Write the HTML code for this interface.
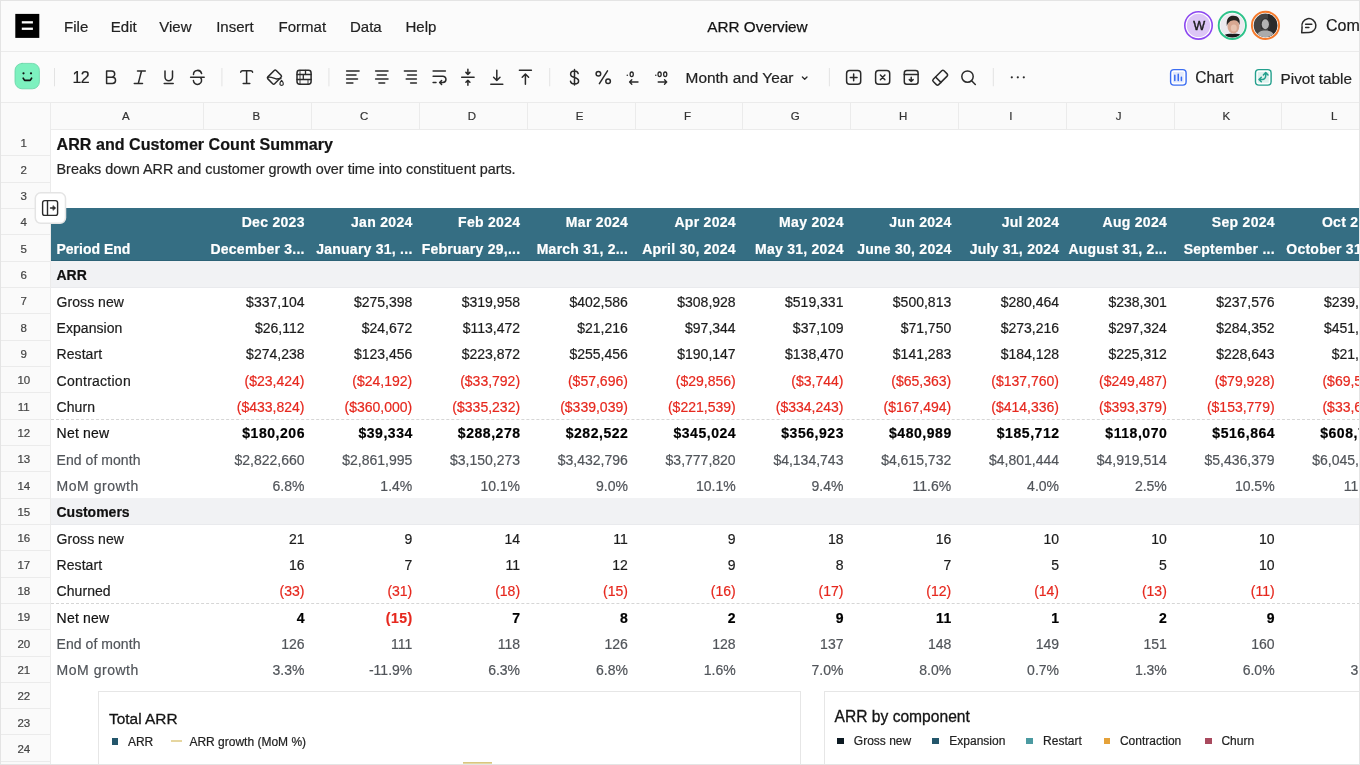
<!DOCTYPE html>
<html><head><meta charset="utf-8"><style>
html,body{margin:0;padding:0;}
body{width:1360px;height:765px;overflow:hidden;position:relative;background:#fff;font-family:"Liberation Sans", sans-serif;}
.t{position:absolute;white-space:nowrap;line-height:1;-webkit-text-stroke:0.2px currentColor;}
#wrap{position:absolute;left:0;top:0;width:1360px;height:765px;overflow:hidden;will-change:transform;background:#fff;}
</style></head><body><div id="wrap">
<div style="position:absolute;left:0.00px;top:0.00px;width:1360.00px;height:51.00px;background:#fbfbfb;"></div>
<div style="position:absolute;left:0.00px;top:51.00px;width:1360.00px;height:1.00px;background:#ebebeb;"></div>
<div style="position:absolute;left:0.00px;top:52.00px;width:1360.00px;height:49.50px;background:#fbfbfb;"></div>
<div style="position:absolute;left:0.00px;top:101.50px;width:1360.00px;height:1.00px;background:#ebebeb;"></div>
<div style="position:absolute;left:0.00px;top:102.50px;width:1360.00px;height:27.00px;background:#fafafa;"></div>
<div style="position:absolute;left:0.00px;top:128.90px;width:1360.00px;height:1.00px;background:#ebebeb;"></div>
<div style="position:absolute;left:0.00px;top:129.40px;width:50.65px;height:635.60px;background:#fafafa;"></div>
<div style="position:absolute;left:50.15px;top:102.50px;width:1.00px;height:662.50px;background:#ebebeb;"></div>
<div style="position:absolute;left:0.00px;top:155.23px;width:50.15px;height:1.00px;background:#ebebeb;"></div>
<div style="position:absolute;left:0.00px;top:181.56px;width:50.15px;height:1.00px;background:#ebebeb;"></div>
<div style="position:absolute;left:0.00px;top:207.89px;width:50.15px;height:1.00px;background:#ebebeb;"></div>
<div style="position:absolute;left:0.00px;top:234.22px;width:50.15px;height:1.00px;background:#ebebeb;"></div>
<div style="position:absolute;left:0.00px;top:260.55px;width:50.15px;height:1.00px;background:#ebebeb;"></div>
<div style="position:absolute;left:0.00px;top:286.88px;width:50.15px;height:1.00px;background:#ebebeb;"></div>
<div style="position:absolute;left:0.00px;top:313.21px;width:50.15px;height:1.00px;background:#ebebeb;"></div>
<div style="position:absolute;left:0.00px;top:339.54px;width:50.15px;height:1.00px;background:#ebebeb;"></div>
<div style="position:absolute;left:0.00px;top:365.87px;width:50.15px;height:1.00px;background:#ebebeb;"></div>
<div style="position:absolute;left:0.00px;top:392.20px;width:50.15px;height:1.00px;background:#ebebeb;"></div>
<div style="position:absolute;left:0.00px;top:418.53px;width:50.15px;height:1.00px;background:#ebebeb;"></div>
<div style="position:absolute;left:0.00px;top:444.86px;width:50.15px;height:1.00px;background:#ebebeb;"></div>
<div style="position:absolute;left:0.00px;top:471.19px;width:50.15px;height:1.00px;background:#ebebeb;"></div>
<div style="position:absolute;left:0.00px;top:497.52px;width:50.15px;height:1.00px;background:#ebebeb;"></div>
<div style="position:absolute;left:0.00px;top:523.85px;width:50.15px;height:1.00px;background:#ebebeb;"></div>
<div style="position:absolute;left:0.00px;top:550.18px;width:50.15px;height:1.00px;background:#ebebeb;"></div>
<div style="position:absolute;left:0.00px;top:576.51px;width:50.15px;height:1.00px;background:#ebebeb;"></div>
<div style="position:absolute;left:0.00px;top:602.84px;width:50.15px;height:1.00px;background:#ebebeb;"></div>
<div style="position:absolute;left:0.00px;top:629.17px;width:50.15px;height:1.00px;background:#ebebeb;"></div>
<div style="position:absolute;left:0.00px;top:655.50px;width:50.15px;height:1.00px;background:#ebebeb;"></div>
<div style="position:absolute;left:0.00px;top:681.83px;width:50.15px;height:1.00px;background:#ebebeb;"></div>
<div style="position:absolute;left:0.00px;top:708.16px;width:50.15px;height:1.00px;background:#ebebeb;"></div>
<div style="position:absolute;left:0.00px;top:734.49px;width:50.15px;height:1.00px;background:#ebebeb;"></div>
<div style="position:absolute;left:0.00px;top:760.82px;width:50.15px;height:1.00px;background:#ebebeb;"></div>
<div style="position:absolute;left:0.00px;top:787.15px;width:50.15px;height:1.00px;background:#ebebeb;"></div>
<div style="position:absolute;left:203.40px;top:102.50px;width:1.00px;height:27.00px;background:#ebebeb;"></div>
<div style="position:absolute;left:311.19px;top:102.50px;width:1.00px;height:27.00px;background:#ebebeb;"></div>
<div style="position:absolute;left:418.98px;top:102.50px;width:1.00px;height:27.00px;background:#ebebeb;"></div>
<div style="position:absolute;left:526.77px;top:102.50px;width:1.00px;height:27.00px;background:#ebebeb;"></div>
<div style="position:absolute;left:634.56px;top:102.50px;width:1.00px;height:27.00px;background:#ebebeb;"></div>
<div style="position:absolute;left:742.35px;top:102.50px;width:1.00px;height:27.00px;background:#ebebeb;"></div>
<div style="position:absolute;left:850.14px;top:102.50px;width:1.00px;height:27.00px;background:#ebebeb;"></div>
<div style="position:absolute;left:957.93px;top:102.50px;width:1.00px;height:27.00px;background:#ebebeb;"></div>
<div style="position:absolute;left:1065.72px;top:102.50px;width:1.00px;height:27.00px;background:#ebebeb;"></div>
<div style="position:absolute;left:1173.51px;top:102.50px;width:1.00px;height:27.00px;background:#ebebeb;"></div>
<div style="position:absolute;left:1281.30px;top:102.50px;width:1.00px;height:27.00px;background:#ebebeb;"></div>
<div style="position:absolute;left:1389.09px;top:102.50px;width:1.00px;height:27.00px;background:#ebebeb;"></div>
<div class="t" style="left:25.78px;width:200px;text-align:center;top:110.57px;font-size:11.5px;font-weight:400;color:#333;">A</div>
<div class="t" style="left:156.30px;width:200px;text-align:center;top:110.57px;font-size:11.5px;font-weight:400;color:#333;">B</div>
<div class="t" style="left:264.09px;width:200px;text-align:center;top:110.57px;font-size:11.5px;font-weight:400;color:#333;">C</div>
<div class="t" style="left:371.88px;width:200px;text-align:center;top:110.57px;font-size:11.5px;font-weight:400;color:#333;">D</div>
<div class="t" style="left:479.66px;width:200px;text-align:center;top:110.57px;font-size:11.5px;font-weight:400;color:#333;">E</div>
<div class="t" style="left:587.46px;width:200px;text-align:center;top:110.57px;font-size:11.5px;font-weight:400;color:#333;">F</div>
<div class="t" style="left:695.25px;width:200px;text-align:center;top:110.57px;font-size:11.5px;font-weight:400;color:#333;">G</div>
<div class="t" style="left:803.04px;width:200px;text-align:center;top:110.57px;font-size:11.5px;font-weight:400;color:#333;">H</div>
<div class="t" style="left:910.83px;width:200px;text-align:center;top:110.57px;font-size:11.5px;font-weight:400;color:#333;">I</div>
<div class="t" style="left:1018.62px;width:200px;text-align:center;top:110.57px;font-size:11.5px;font-weight:400;color:#333;">J</div>
<div class="t" style="left:1126.41px;width:200px;text-align:center;top:110.57px;font-size:11.5px;font-weight:400;color:#333;">K</div>
<div class="t" style="left:1234.20px;width:200px;text-align:center;top:110.57px;font-size:11.5px;font-weight:400;color:#333;">L</div>
<div class="t" style="left:-76.20px;width:200px;text-align:center;top:138.27px;font-size:11.5px;font-weight:400;color:#444;">1</div>
<div class="t" style="left:-76.20px;width:200px;text-align:center;top:164.60px;font-size:11.5px;font-weight:400;color:#444;">2</div>
<div class="t" style="left:-76.20px;width:200px;text-align:center;top:190.93px;font-size:11.5px;font-weight:400;color:#444;">3</div>
<div class="t" style="left:-76.20px;width:200px;text-align:center;top:217.26px;font-size:11.5px;font-weight:400;color:#444;">4</div>
<div class="t" style="left:-76.20px;width:200px;text-align:center;top:243.59px;font-size:11.5px;font-weight:400;color:#444;">5</div>
<div class="t" style="left:-76.20px;width:200px;text-align:center;top:269.92px;font-size:11.5px;font-weight:400;color:#444;">6</div>
<div class="t" style="left:-76.20px;width:200px;text-align:center;top:296.25px;font-size:11.5px;font-weight:400;color:#444;">7</div>
<div class="t" style="left:-76.20px;width:200px;text-align:center;top:322.58px;font-size:11.5px;font-weight:400;color:#444;">8</div>
<div class="t" style="left:-76.20px;width:200px;text-align:center;top:348.91px;font-size:11.5px;font-weight:400;color:#444;">9</div>
<div class="t" style="left:-76.20px;width:200px;text-align:center;top:375.24px;font-size:11.5px;font-weight:400;color:#444;">10</div>
<div class="t" style="left:-76.20px;width:200px;text-align:center;top:401.57px;font-size:11.5px;font-weight:400;color:#444;">11</div>
<div class="t" style="left:-76.20px;width:200px;text-align:center;top:427.90px;font-size:11.5px;font-weight:400;color:#444;">12</div>
<div class="t" style="left:-76.20px;width:200px;text-align:center;top:454.23px;font-size:11.5px;font-weight:400;color:#444;">13</div>
<div class="t" style="left:-76.20px;width:200px;text-align:center;top:480.56px;font-size:11.5px;font-weight:400;color:#444;">14</div>
<div class="t" style="left:-76.20px;width:200px;text-align:center;top:506.89px;font-size:11.5px;font-weight:400;color:#444;">15</div>
<div class="t" style="left:-76.20px;width:200px;text-align:center;top:533.22px;font-size:11.5px;font-weight:400;color:#444;">16</div>
<div class="t" style="left:-76.20px;width:200px;text-align:center;top:559.55px;font-size:11.5px;font-weight:400;color:#444;">17</div>
<div class="t" style="left:-76.20px;width:200px;text-align:center;top:585.88px;font-size:11.5px;font-weight:400;color:#444;">18</div>
<div class="t" style="left:-76.20px;width:200px;text-align:center;top:612.21px;font-size:11.5px;font-weight:400;color:#444;">19</div>
<div class="t" style="left:-76.20px;width:200px;text-align:center;top:638.54px;font-size:11.5px;font-weight:400;color:#444;">20</div>
<div class="t" style="left:-76.20px;width:200px;text-align:center;top:664.87px;font-size:11.5px;font-weight:400;color:#444;">21</div>
<div class="t" style="left:-76.20px;width:200px;text-align:center;top:691.20px;font-size:11.5px;font-weight:400;color:#444;">22</div>
<div class="t" style="left:-76.20px;width:200px;text-align:center;top:717.53px;font-size:11.5px;font-weight:400;color:#444;">23</div>
<div class="t" style="left:-76.20px;width:200px;text-align:center;top:743.86px;font-size:11.5px;font-weight:400;color:#444;">24</div>
<div class="t" style="left:56.60px;top:135.77px;font-size:16.1px;font-weight:700;color:#141414;">ARR and Customer Count Summary</div>
<div class="t" style="left:56.50px;top:162.21px;font-size:14.4px;font-weight:400;color:#262626;">Breaks down ARR and customer growth over time into constituent parts.</div>
<div style="position:absolute;left:50.65px;top:208.39px;width:1309.35px;height:52.21px;background:#356e83;"></div>
<div style="position:absolute;left:50.65px;top:259.60px;width:1309.35px;height:1.00px;background:#2c6276;"></div>
<div class="t" style="right:1055.21px;top:215.29px;font-size:14px;font-weight:700;color:#fff;letter-spacing:0.3px;">Dec 2023</div>
<div class="t" style="right:1055.26px;top:241.87px;font-size:14px;font-weight:700;color:#fff;letter-spacing:0.25px;">December 3...</div>
<div class="t" style="right:947.42px;top:215.29px;font-size:14px;font-weight:700;color:#fff;letter-spacing:0.3px;">Jan 2024</div>
<div class="t" style="right:947.47px;top:241.87px;font-size:14px;font-weight:700;color:#fff;letter-spacing:0.25px;">January 31, ...</div>
<div class="t" style="right:839.63px;top:215.29px;font-size:14px;font-weight:700;color:#fff;letter-spacing:0.3px;">Feb 2024</div>
<div class="t" style="right:839.68px;top:241.87px;font-size:14px;font-weight:700;color:#fff;letter-spacing:0.25px;">February 29,...</div>
<div class="t" style="right:731.84px;top:215.29px;font-size:14px;font-weight:700;color:#fff;letter-spacing:0.3px;">Mar 2024</div>
<div class="t" style="right:731.89px;top:241.87px;font-size:14px;font-weight:700;color:#fff;letter-spacing:0.25px;">March 31, 2...</div>
<div class="t" style="right:624.05px;top:215.29px;font-size:14px;font-weight:700;color:#fff;letter-spacing:0.3px;">Apr 2024</div>
<div class="t" style="right:624.10px;top:241.87px;font-size:14px;font-weight:700;color:#fff;letter-spacing:0.25px;">April 30, 2024</div>
<div class="t" style="right:516.26px;top:215.29px;font-size:14px;font-weight:700;color:#fff;letter-spacing:0.3px;">May 2024</div>
<div class="t" style="right:516.31px;top:241.87px;font-size:14px;font-weight:700;color:#fff;letter-spacing:0.25px;">May 31, 2024</div>
<div class="t" style="right:408.47px;top:215.29px;font-size:14px;font-weight:700;color:#fff;letter-spacing:0.3px;">Jun 2024</div>
<div class="t" style="right:408.52px;top:241.87px;font-size:14px;font-weight:700;color:#fff;letter-spacing:0.25px;">June 30, 2024</div>
<div class="t" style="right:300.68px;top:215.29px;font-size:14px;font-weight:700;color:#fff;letter-spacing:0.3px;">Jul 2024</div>
<div class="t" style="right:300.73px;top:241.87px;font-size:14px;font-weight:700;color:#fff;letter-spacing:0.25px;">July 31, 2024</div>
<div class="t" style="right:192.89px;top:215.29px;font-size:14px;font-weight:700;color:#fff;letter-spacing:0.3px;">Aug 2024</div>
<div class="t" style="right:192.94px;top:241.87px;font-size:14px;font-weight:700;color:#fff;letter-spacing:0.25px;">August 31, 2...</div>
<div class="t" style="right:85.10px;top:215.29px;font-size:14px;font-weight:700;color:#fff;letter-spacing:0.3px;">Sep 2024</div>
<div class="t" style="right:85.15px;top:241.87px;font-size:14px;font-weight:700;color:#fff;letter-spacing:0.25px;">September ...</div>
<div class="t" style="right:-22.69px;top:215.29px;font-size:14px;font-weight:700;color:#fff;letter-spacing:0.3px;">Oct 2024</div>
<div class="t" style="right:-22.64px;top:241.87px;font-size:14px;font-weight:700;color:#fff;letter-spacing:0.25px;">October 31, ...</div>
<div class="t" style="left:56.50px;top:241.72px;font-size:14px;font-weight:700;color:#fff;">Period End</div>
<div style="position:absolute;left:51.15px;top:261.35px;width:1309.35px;height:25.73px;background:#f1f2f4;"></div>
<div style="position:absolute;left:51.15px;top:286.58px;width:1309.35px;height:1.00px;background:#e9eaed;"></div>
<div class="t" style="left:56.50px;top:268.05px;font-size:14px;font-weight:700;color:#111;">ARR</div>
<div style="position:absolute;left:51.15px;top:498.32px;width:1309.35px;height:25.73px;background:#f1f2f4;"></div>
<div style="position:absolute;left:51.15px;top:523.55px;width:1309.35px;height:1.00px;background:#e9eaed;"></div>
<div class="t" style="left:56.50px;top:505.02px;font-size:14px;font-weight:700;color:#111;">Customers</div>
<div class="t" style="left:56.60px;top:294.83px;font-size:14px;font-weight:400;color:#1c1c1c;letter-spacing:0.05px;">Gross new</div>
<div class="t" style="right:1055.51px;top:294.83px;font-size:14px;font-weight:400;color:#1c1c1c;">$337,104</div>
<div class="t" style="right:947.72px;top:294.83px;font-size:14px;font-weight:400;color:#1c1c1c;">$275,398</div>
<div class="t" style="right:839.93px;top:294.83px;font-size:14px;font-weight:400;color:#1c1c1c;">$319,958</div>
<div class="t" style="right:732.14px;top:294.83px;font-size:14px;font-weight:400;color:#1c1c1c;">$402,586</div>
<div class="t" style="right:624.35px;top:294.83px;font-size:14px;font-weight:400;color:#1c1c1c;">$308,928</div>
<div class="t" style="right:516.56px;top:294.83px;font-size:14px;font-weight:400;color:#1c1c1c;">$519,331</div>
<div class="t" style="right:408.77px;top:294.83px;font-size:14px;font-weight:400;color:#1c1c1c;">$500,813</div>
<div class="t" style="right:300.98px;top:294.83px;font-size:14px;font-weight:400;color:#1c1c1c;">$280,464</div>
<div class="t" style="right:193.19px;top:294.83px;font-size:14px;font-weight:400;color:#1c1c1c;">$238,301</div>
<div class="t" style="right:85.40px;top:294.83px;font-size:14px;font-weight:400;color:#1c1c1c;">$237,576</div>
<div class="t" style="right:-22.39px;top:294.83px;font-size:14px;font-weight:400;color:#1c1c1c;">$239,487</div>
<div class="t" style="left:56.60px;top:321.16px;font-size:14px;font-weight:400;color:#1c1c1c;letter-spacing:0.05px;">Expansion</div>
<div class="t" style="right:1055.51px;top:321.16px;font-size:14px;font-weight:400;color:#1c1c1c;">$26,112</div>
<div class="t" style="right:947.72px;top:321.16px;font-size:14px;font-weight:400;color:#1c1c1c;">$24,672</div>
<div class="t" style="right:839.93px;top:321.16px;font-size:14px;font-weight:400;color:#1c1c1c;">$113,472</div>
<div class="t" style="right:732.14px;top:321.16px;font-size:14px;font-weight:400;color:#1c1c1c;">$21,216</div>
<div class="t" style="right:624.35px;top:321.16px;font-size:14px;font-weight:400;color:#1c1c1c;">$97,344</div>
<div class="t" style="right:516.56px;top:321.16px;font-size:14px;font-weight:400;color:#1c1c1c;">$37,109</div>
<div class="t" style="right:408.77px;top:321.16px;font-size:14px;font-weight:400;color:#1c1c1c;">$71,750</div>
<div class="t" style="right:300.98px;top:321.16px;font-size:14px;font-weight:400;color:#1c1c1c;">$273,216</div>
<div class="t" style="right:193.19px;top:321.16px;font-size:14px;font-weight:400;color:#1c1c1c;">$297,324</div>
<div class="t" style="right:85.40px;top:321.16px;font-size:14px;font-weight:400;color:#1c1c1c;">$284,352</div>
<div class="t" style="right:-22.39px;top:321.16px;font-size:14px;font-weight:400;color:#1c1c1c;">$451,792</div>
<div class="t" style="left:56.60px;top:347.49px;font-size:14px;font-weight:400;color:#1c1c1c;letter-spacing:0.05px;">Restart</div>
<div class="t" style="right:1055.51px;top:347.49px;font-size:14px;font-weight:400;color:#1c1c1c;">$274,238</div>
<div class="t" style="right:947.72px;top:347.49px;font-size:14px;font-weight:400;color:#1c1c1c;">$123,456</div>
<div class="t" style="right:839.93px;top:347.49px;font-size:14px;font-weight:400;color:#1c1c1c;">$223,872</div>
<div class="t" style="right:732.14px;top:347.49px;font-size:14px;font-weight:400;color:#1c1c1c;">$255,456</div>
<div class="t" style="right:624.35px;top:347.49px;font-size:14px;font-weight:400;color:#1c1c1c;">$190,147</div>
<div class="t" style="right:516.56px;top:347.49px;font-size:14px;font-weight:400;color:#1c1c1c;">$138,470</div>
<div class="t" style="right:408.77px;top:347.49px;font-size:14px;font-weight:400;color:#1c1c1c;">$141,283</div>
<div class="t" style="right:300.98px;top:347.49px;font-size:14px;font-weight:400;color:#1c1c1c;">$184,128</div>
<div class="t" style="right:193.19px;top:347.49px;font-size:14px;font-weight:400;color:#1c1c1c;">$225,312</div>
<div class="t" style="right:85.40px;top:347.49px;font-size:14px;font-weight:400;color:#1c1c1c;">$228,643</div>
<div class="t" style="right:-22.39px;top:347.49px;font-size:14px;font-weight:400;color:#1c1c1c;">$21,983</div>
<div class="t" style="left:56.60px;top:373.82px;font-size:14px;font-weight:400;color:#1c1c1c;letter-spacing:0.25px;">Contraction</div>
<div class="t" style="right:1055.51px;top:373.82px;font-size:14px;font-weight:400;color:#e6281e;">($23,424)</div>
<div class="t" style="right:947.72px;top:373.82px;font-size:14px;font-weight:400;color:#e6281e;">($24,192)</div>
<div class="t" style="right:839.93px;top:373.82px;font-size:14px;font-weight:400;color:#e6281e;">($33,792)</div>
<div class="t" style="right:732.14px;top:373.82px;font-size:14px;font-weight:400;color:#e6281e;">($57,696)</div>
<div class="t" style="right:624.35px;top:373.82px;font-size:14px;font-weight:400;color:#e6281e;">($29,856)</div>
<div class="t" style="right:516.56px;top:373.82px;font-size:14px;font-weight:400;color:#e6281e;">($3,744)</div>
<div class="t" style="right:408.77px;top:373.82px;font-size:14px;font-weight:400;color:#e6281e;">($65,363)</div>
<div class="t" style="right:300.98px;top:373.82px;font-size:14px;font-weight:400;color:#e6281e;">($137,760)</div>
<div class="t" style="right:193.19px;top:373.82px;font-size:14px;font-weight:400;color:#e6281e;">($249,487)</div>
<div class="t" style="right:85.40px;top:373.82px;font-size:14px;font-weight:400;color:#e6281e;">($79,928)</div>
<div class="t" style="right:-22.39px;top:373.82px;font-size:14px;font-weight:400;color:#e6281e;">($69,521)</div>
<div class="t" style="left:56.60px;top:400.15px;font-size:14px;font-weight:400;color:#1c1c1c;letter-spacing:0.05px;">Churn</div>
<div class="t" style="right:1055.51px;top:400.15px;font-size:14px;font-weight:400;color:#e6281e;">($433,824)</div>
<div class="t" style="right:947.72px;top:400.15px;font-size:14px;font-weight:400;color:#e6281e;">($360,000)</div>
<div class="t" style="right:839.93px;top:400.15px;font-size:14px;font-weight:400;color:#e6281e;">($335,232)</div>
<div class="t" style="right:732.14px;top:400.15px;font-size:14px;font-weight:400;color:#e6281e;">($339,039)</div>
<div class="t" style="right:624.35px;top:400.15px;font-size:14px;font-weight:400;color:#e6281e;">($221,539)</div>
<div class="t" style="right:516.56px;top:400.15px;font-size:14px;font-weight:400;color:#e6281e;">($334,243)</div>
<div class="t" style="right:408.77px;top:400.15px;font-size:14px;font-weight:400;color:#e6281e;">($167,494)</div>
<div class="t" style="right:300.98px;top:400.15px;font-size:14px;font-weight:400;color:#e6281e;">($414,336)</div>
<div class="t" style="right:193.19px;top:400.15px;font-size:14px;font-weight:400;color:#e6281e;">($393,379)</div>
<div class="t" style="right:85.40px;top:400.15px;font-size:14px;font-weight:400;color:#e6281e;">($153,779)</div>
<div class="t" style="right:-22.39px;top:400.15px;font-size:14px;font-weight:400;color:#e6281e;">($33,612)</div>
<div class="t" style="left:56.60px;top:426.48px;font-size:14px;font-weight:400;color:#111;letter-spacing:0.2px;">Net new</div>
<div class="t" style="right:1054.96px;top:426.48px;font-size:14px;font-weight:700;color:#000;letter-spacing:0.55px;">$180,206</div>
<div class="t" style="right:947.17px;top:426.48px;font-size:14px;font-weight:700;color:#000;letter-spacing:0.55px;">$39,334</div>
<div class="t" style="right:839.38px;top:426.48px;font-size:14px;font-weight:700;color:#000;letter-spacing:0.55px;">$288,278</div>
<div class="t" style="right:731.59px;top:426.48px;font-size:14px;font-weight:700;color:#000;letter-spacing:0.55px;">$282,522</div>
<div class="t" style="right:623.80px;top:426.48px;font-size:14px;font-weight:700;color:#000;letter-spacing:0.55px;">$345,024</div>
<div class="t" style="right:516.01px;top:426.48px;font-size:14px;font-weight:700;color:#000;letter-spacing:0.55px;">$356,923</div>
<div class="t" style="right:408.22px;top:426.48px;font-size:14px;font-weight:700;color:#000;letter-spacing:0.55px;">$480,989</div>
<div class="t" style="right:300.43px;top:426.48px;font-size:14px;font-weight:700;color:#000;letter-spacing:0.55px;">$185,712</div>
<div class="t" style="right:192.64px;top:426.48px;font-size:14px;font-weight:700;color:#000;letter-spacing:0.55px;">$118,070</div>
<div class="t" style="right:84.85px;top:426.48px;font-size:14px;font-weight:700;color:#000;letter-spacing:0.55px;">$516,864</div>
<div class="t" style="right:-22.94px;top:426.48px;font-size:14px;font-weight:700;color:#000;letter-spacing:0.55px;">$608,719</div>
<div class="t" style="left:56.60px;top:452.81px;font-size:14px;font-weight:400;color:#51555a;letter-spacing:0.05px;">End of month</div>
<div class="t" style="right:1055.51px;top:452.81px;font-size:14px;font-weight:400;color:#51555a;">$2,822,660</div>
<div class="t" style="right:947.72px;top:452.81px;font-size:14px;font-weight:400;color:#51555a;">$2,861,995</div>
<div class="t" style="right:839.93px;top:452.81px;font-size:14px;font-weight:400;color:#51555a;">$3,150,273</div>
<div class="t" style="right:732.14px;top:452.81px;font-size:14px;font-weight:400;color:#51555a;">$3,432,796</div>
<div class="t" style="right:624.35px;top:452.81px;font-size:14px;font-weight:400;color:#51555a;">$3,777,820</div>
<div class="t" style="right:516.56px;top:452.81px;font-size:14px;font-weight:400;color:#51555a;">$4,134,743</div>
<div class="t" style="right:408.77px;top:452.81px;font-size:14px;font-weight:400;color:#51555a;">$4,615,732</div>
<div class="t" style="right:300.98px;top:452.81px;font-size:14px;font-weight:400;color:#51555a;">$4,801,444</div>
<div class="t" style="right:193.19px;top:452.81px;font-size:14px;font-weight:400;color:#51555a;">$4,919,514</div>
<div class="t" style="right:85.40px;top:452.81px;font-size:14px;font-weight:400;color:#51555a;">$5,436,379</div>
<div class="t" style="right:-22.39px;top:452.81px;font-size:14px;font-weight:400;color:#51555a;">$6,045,098</div>
<div class="t" style="left:56.60px;top:479.14px;font-size:14px;font-weight:400;color:#51555a;letter-spacing:0.52px;">MoM growth</div>
<div class="t" style="right:1055.51px;top:479.14px;font-size:14px;font-weight:400;color:#51555a;">6.8%</div>
<div class="t" style="right:947.72px;top:479.14px;font-size:14px;font-weight:400;color:#51555a;">1.4%</div>
<div class="t" style="right:839.93px;top:479.14px;font-size:14px;font-weight:400;color:#51555a;">10.1%</div>
<div class="t" style="right:732.14px;top:479.14px;font-size:14px;font-weight:400;color:#51555a;">9.0%</div>
<div class="t" style="right:624.35px;top:479.14px;font-size:14px;font-weight:400;color:#51555a;">10.1%</div>
<div class="t" style="right:516.56px;top:479.14px;font-size:14px;font-weight:400;color:#51555a;">9.4%</div>
<div class="t" style="right:408.77px;top:479.14px;font-size:14px;font-weight:400;color:#51555a;">11.6%</div>
<div class="t" style="right:300.98px;top:479.14px;font-size:14px;font-weight:400;color:#51555a;">4.0%</div>
<div class="t" style="right:193.19px;top:479.14px;font-size:14px;font-weight:400;color:#51555a;">2.5%</div>
<div class="t" style="right:85.40px;top:479.14px;font-size:14px;font-weight:400;color:#51555a;">10.5%</div>
<div class="t" style="right:-22.39px;top:479.14px;font-size:14px;font-weight:400;color:#51555a;">11.2%</div>
<div class="t" style="left:56.60px;top:531.80px;font-size:14px;font-weight:400;color:#1c1c1c;letter-spacing:0.05px;">Gross new</div>
<div class="t" style="right:1055.51px;top:531.80px;font-size:14px;font-weight:400;color:#1c1c1c;">21</div>
<div class="t" style="right:947.72px;top:531.80px;font-size:14px;font-weight:400;color:#1c1c1c;">9</div>
<div class="t" style="right:839.93px;top:531.80px;font-size:14px;font-weight:400;color:#1c1c1c;">14</div>
<div class="t" style="right:732.14px;top:531.80px;font-size:14px;font-weight:400;color:#1c1c1c;">11</div>
<div class="t" style="right:624.35px;top:531.80px;font-size:14px;font-weight:400;color:#1c1c1c;">9</div>
<div class="t" style="right:516.56px;top:531.80px;font-size:14px;font-weight:400;color:#1c1c1c;">18</div>
<div class="t" style="right:408.77px;top:531.80px;font-size:14px;font-weight:400;color:#1c1c1c;">16</div>
<div class="t" style="right:300.98px;top:531.80px;font-size:14px;font-weight:400;color:#1c1c1c;">10</div>
<div class="t" style="right:193.19px;top:531.80px;font-size:14px;font-weight:400;color:#1c1c1c;">10</div>
<div class="t" style="right:85.40px;top:531.80px;font-size:14px;font-weight:400;color:#1c1c1c;">10</div>
<div class="t" style="right:-22.39px;top:531.80px;font-size:14px;font-weight:400;color:#1c1c1c;">12</div>
<div class="t" style="left:56.60px;top:558.13px;font-size:14px;font-weight:400;color:#1c1c1c;letter-spacing:0.05px;">Restart</div>
<div class="t" style="right:1055.51px;top:558.13px;font-size:14px;font-weight:400;color:#1c1c1c;">16</div>
<div class="t" style="right:947.72px;top:558.13px;font-size:14px;font-weight:400;color:#1c1c1c;">7</div>
<div class="t" style="right:839.93px;top:558.13px;font-size:14px;font-weight:400;color:#1c1c1c;">11</div>
<div class="t" style="right:732.14px;top:558.13px;font-size:14px;font-weight:400;color:#1c1c1c;">12</div>
<div class="t" style="right:624.35px;top:558.13px;font-size:14px;font-weight:400;color:#1c1c1c;">9</div>
<div class="t" style="right:516.56px;top:558.13px;font-size:14px;font-weight:400;color:#1c1c1c;">8</div>
<div class="t" style="right:408.77px;top:558.13px;font-size:14px;font-weight:400;color:#1c1c1c;">7</div>
<div class="t" style="right:300.98px;top:558.13px;font-size:14px;font-weight:400;color:#1c1c1c;">5</div>
<div class="t" style="right:193.19px;top:558.13px;font-size:14px;font-weight:400;color:#1c1c1c;">5</div>
<div class="t" style="right:85.40px;top:558.13px;font-size:14px;font-weight:400;color:#1c1c1c;">10</div>
<div class="t" style="right:-22.39px;top:558.13px;font-size:14px;font-weight:400;color:#1c1c1c;">9</div>
<div class="t" style="left:56.60px;top:584.46px;font-size:14px;font-weight:400;color:#1c1c1c;letter-spacing:0.05px;">Churned</div>
<div class="t" style="right:1055.51px;top:584.46px;font-size:14px;font-weight:400;color:#e6281e;">(33)</div>
<div class="t" style="right:947.72px;top:584.46px;font-size:14px;font-weight:400;color:#e6281e;">(31)</div>
<div class="t" style="right:839.93px;top:584.46px;font-size:14px;font-weight:400;color:#e6281e;">(18)</div>
<div class="t" style="right:732.14px;top:584.46px;font-size:14px;font-weight:400;color:#e6281e;">(15)</div>
<div class="t" style="right:624.35px;top:584.46px;font-size:14px;font-weight:400;color:#e6281e;">(16)</div>
<div class="t" style="right:516.56px;top:584.46px;font-size:14px;font-weight:400;color:#e6281e;">(17)</div>
<div class="t" style="right:408.77px;top:584.46px;font-size:14px;font-weight:400;color:#e6281e;">(12)</div>
<div class="t" style="right:300.98px;top:584.46px;font-size:14px;font-weight:400;color:#e6281e;">(14)</div>
<div class="t" style="right:193.19px;top:584.46px;font-size:14px;font-weight:400;color:#e6281e;">(13)</div>
<div class="t" style="right:85.40px;top:584.46px;font-size:14px;font-weight:400;color:#e6281e;">(11)</div>
<div class="t" style="right:-22.39px;top:584.46px;font-size:14px;font-weight:400;color:#e6281e;">(8)</div>
<div class="t" style="left:56.60px;top:610.79px;font-size:14px;font-weight:400;color:#111;letter-spacing:0.2px;">Net new</div>
<div class="t" style="right:1054.96px;top:610.79px;font-size:14px;font-weight:700;color:#000;letter-spacing:0.55px;">4</div>
<div class="t" style="right:947.17px;top:610.79px;font-size:14px;font-weight:700;color:#e6281e;letter-spacing:0.55px;">(15)</div>
<div class="t" style="right:839.38px;top:610.79px;font-size:14px;font-weight:700;color:#000;letter-spacing:0.55px;">7</div>
<div class="t" style="right:731.59px;top:610.79px;font-size:14px;font-weight:700;color:#000;letter-spacing:0.55px;">8</div>
<div class="t" style="right:623.80px;top:610.79px;font-size:14px;font-weight:700;color:#000;letter-spacing:0.55px;">2</div>
<div class="t" style="right:516.01px;top:610.79px;font-size:14px;font-weight:700;color:#000;letter-spacing:0.55px;">9</div>
<div class="t" style="right:408.22px;top:610.79px;font-size:14px;font-weight:700;color:#000;letter-spacing:0.55px;">11</div>
<div class="t" style="right:300.43px;top:610.79px;font-size:14px;font-weight:700;color:#000;letter-spacing:0.55px;">1</div>
<div class="t" style="right:192.64px;top:610.79px;font-size:14px;font-weight:700;color:#000;letter-spacing:0.55px;">2</div>
<div class="t" style="right:84.85px;top:610.79px;font-size:14px;font-weight:700;color:#000;letter-spacing:0.55px;">9</div>
<div class="t" style="right:-22.94px;top:610.79px;font-size:14px;font-weight:700;color:#000;letter-spacing:0.55px;">7</div>
<div class="t" style="left:56.60px;top:637.12px;font-size:14px;font-weight:400;color:#51555a;letter-spacing:0.05px;">End of month</div>
<div class="t" style="right:1055.51px;top:637.12px;font-size:14px;font-weight:400;color:#51555a;">126</div>
<div class="t" style="right:947.72px;top:637.12px;font-size:14px;font-weight:400;color:#51555a;">111</div>
<div class="t" style="right:839.93px;top:637.12px;font-size:14px;font-weight:400;color:#51555a;">118</div>
<div class="t" style="right:732.14px;top:637.12px;font-size:14px;font-weight:400;color:#51555a;">126</div>
<div class="t" style="right:624.35px;top:637.12px;font-size:14px;font-weight:400;color:#51555a;">128</div>
<div class="t" style="right:516.56px;top:637.12px;font-size:14px;font-weight:400;color:#51555a;">137</div>
<div class="t" style="right:408.77px;top:637.12px;font-size:14px;font-weight:400;color:#51555a;">148</div>
<div class="t" style="right:300.98px;top:637.12px;font-size:14px;font-weight:400;color:#51555a;">149</div>
<div class="t" style="right:193.19px;top:637.12px;font-size:14px;font-weight:400;color:#51555a;">151</div>
<div class="t" style="right:85.40px;top:637.12px;font-size:14px;font-weight:400;color:#51555a;">160</div>
<div class="t" style="right:-22.39px;top:637.12px;font-size:14px;font-weight:400;color:#51555a;">167</div>
<div class="t" style="left:56.60px;top:663.45px;font-size:14px;font-weight:400;color:#51555a;letter-spacing:0.52px;">MoM growth</div>
<div class="t" style="right:1055.51px;top:663.45px;font-size:14px;font-weight:400;color:#51555a;">3.3%</div>
<div class="t" style="right:947.72px;top:663.45px;font-size:14px;font-weight:400;color:#51555a;">-11.9%</div>
<div class="t" style="right:839.93px;top:663.45px;font-size:14px;font-weight:400;color:#51555a;">6.3%</div>
<div class="t" style="right:732.14px;top:663.45px;font-size:14px;font-weight:400;color:#51555a;">6.8%</div>
<div class="t" style="right:624.35px;top:663.45px;font-size:14px;font-weight:400;color:#51555a;">1.6%</div>
<div class="t" style="right:516.56px;top:663.45px;font-size:14px;font-weight:400;color:#51555a;">7.0%</div>
<div class="t" style="right:408.77px;top:663.45px;font-size:14px;font-weight:400;color:#51555a;">8.0%</div>
<div class="t" style="right:300.98px;top:663.45px;font-size:14px;font-weight:400;color:#51555a;">0.7%</div>
<div class="t" style="right:193.19px;top:663.45px;font-size:14px;font-weight:400;color:#51555a;">1.3%</div>
<div class="t" style="right:85.40px;top:663.45px;font-size:14px;font-weight:400;color:#51555a;">6.0%</div>
<div class="t" style="right:-22.39px;top:663.45px;font-size:14px;font-weight:400;color:#51555a;">3.4%</div>
<div style="position:absolute;left:51.15px;top:418.53px;width:1309.35px;height:0;border-top:1px dashed #d6d6d6"></div>
<div style="position:absolute;left:51.15px;top:602.84px;width:1309.35px;height:0;border-top:1px dashed #d6d6d6"></div>
<div class="t" style="left:64.10px;top:19.10px;font-size:15px;font-weight:400;color:#222;">File</div>
<div class="t" style="left:110.80px;top:19.10px;font-size:15px;font-weight:400;color:#222;">Edit</div>
<div class="t" style="left:159.30px;top:19.10px;font-size:15px;font-weight:400;color:#222;">View</div>
<div class="t" style="left:216.20px;top:19.10px;font-size:15px;font-weight:400;color:#222;">Insert</div>
<div class="t" style="left:278.60px;top:19.10px;font-size:15px;font-weight:400;color:#222;">Format</div>
<div class="t" style="left:350.00px;top:19.10px;font-size:15px;font-weight:400;color:#222;">Data</div>
<div class="t" style="left:405.50px;top:19.10px;font-size:15px;font-weight:400;color:#222;">Help</div>
<div class="t" style="left:707.30px;top:18.65px;font-size:15.3px;font-weight:400;color:#141414;-webkit-text-stroke:0.25px #141414;">ARR Overview</div>
<div class="t" style="left:1326.00px;top:18.06px;font-size:16px;font-weight:400;color:#1a1a1a;">Com</div>
<div class="t" style="left:72.60px;top:69.76px;font-size:16px;font-weight:400;color:#222;letter-spacing:-0.8px;">12</div>
<div class="t" style="left:685.60px;top:70.06px;font-size:15.4px;font-weight:400;color:#222;">Month and Year</div>
<div class="t" style="left:1195.30px;top:70.29px;font-size:15.6px;font-weight:400;color:#222;">Chart</div>
<div class="t" style="left:1280.60px;top:70.55px;font-size:15.3px;font-weight:400;color:#222;">Pivot table</div>
<div style="position:absolute;left:98.2px;top:691.2px;width:702.7px;height:120px;border:1px solid #e6e6e6;box-sizing:border-box;background:#fff"></div>
<div style="position:absolute;left:824.4px;top:690.8px;width:600px;height:120px;border:1px solid #e6e6e6;box-sizing:border-box;background:#fff"></div>
<div class="t" style="left:109.10px;top:710.76px;font-size:15.4px;font-weight:400;color:#141414;-webkit-text-stroke:0.3px #141414;">Total ARR</div>
<div class="t" style="left:834.60px;top:709.39px;font-size:15.6px;font-weight:400;color:#141414;-webkit-text-stroke:0.3px #141414;">ARR by component</div>
<div style="position:absolute;left:111.50px;top:738.20px;width:6.80px;height:7.00px;background:#23566b;"></div>
<div class="t" style="left:127.90px;top:735.84px;font-size:12px;font-weight:400;color:#222;">ARR</div>
<div style="position:absolute;left:170.60px;top:740.00px;width:11.70px;height:2.00px;background:#e6d6a0;"></div>
<div class="t" style="left:189.40px;top:735.84px;font-size:12px;font-weight:400;color:#222;">ARR growth (MoM %)</div>
<div style="position:absolute;left:463.40px;top:762.40px;width:28.20px;height:3.00px;background:#e6d8a3;"></div>
<div style="position:absolute;left:463.40px;top:762.40px;width:28.20px;height:1.00px;background:#d8c67f;"></div>
<div style="position:absolute;left:837.40px;top:737.60px;width:6.60px;height:6.60px;background:#0d1a22;"></div>
<div class="t" style="left:853.80px;top:735.44px;font-size:12px;font-weight:400;color:#222;">Gross new</div>
<div style="position:absolute;left:932.40px;top:737.60px;width:6.60px;height:6.60px;background:#23566b;"></div>
<div class="t" style="left:949.30px;top:735.44px;font-size:12px;font-weight:400;color:#222;">Expansion</div>
<div style="position:absolute;left:1026.30px;top:737.60px;width:6.60px;height:6.60px;background:#4b9aa1;"></div>
<div class="t" style="left:1043.10px;top:735.44px;font-size:12px;font-weight:400;color:#222;">Restart</div>
<div style="position:absolute;left:1103.80px;top:737.60px;width:6.60px;height:6.60px;background:#e5a23a;"></div>
<div class="t" style="left:1119.90px;top:735.44px;font-size:12px;font-weight:400;color:#222;">Contraction</div>
<div style="position:absolute;left:1205.00px;top:737.60px;width:6.60px;height:6.60px;background:#a94a5e;"></div>
<div class="t" style="left:1221.40px;top:735.44px;font-size:12px;font-weight:400;color:#222;">Churn</div>
<div style="position:absolute;left:0.00px;top:0.00px;width:1360.00px;height:1.00px;background:#e4e4e4;"></div>
<div style="position:absolute;left:0.00px;top:0.00px;width:1.00px;height:765.00px;background:#e4e4e4;"></div>
<div style="position:absolute;left:1359.00px;top:0.00px;width:1.00px;height:765.00px;background:#e4e4e4;"></div>
<div style="position:absolute;left:0.00px;top:764.00px;width:1360.00px;height:1.00px;background:#e4e4e4;"></div>
<svg width="1360" height="765" viewBox="0 0 1360 765" style="position:absolute;left:0;top:0" fill="none" stroke="#2a2a2a" stroke-width="1.5" stroke-linecap="round" stroke-linejoin="round">
<!-- logo -->
<rect x="15.3" y="13.9" width="24" height="24" fill="#000" stroke="none"/>
<rect x="21.8" y="21.2" width="11.1" height="2.3" fill="#fff" stroke="none"/>
<rect x="21.8" y="27.6" width="11.1" height="2.3" fill="#fff" stroke="none"/>
<!-- smiley -->
<rect x="15" y="63.4" width="24.4" height="25.4" rx="7" fill="#7df1bf" stroke="#66d3a4" stroke-width="0.8"/>
<circle cx="23.5" cy="73.3" r="1.1" fill="#111" stroke="none"/>
<circle cx="31" cy="73.3" r="1.1" fill="#111" stroke="none"/>
<path d="M23.2,78.2 L24.6,80.4 H30.2 L31.6,78.2" stroke="#111" stroke-width="1.6"/>
<!-- separators -->
<g stroke="#e3e3e3" stroke-width="1" stroke-linecap="butt">
<path d="M54.5,68 V86.3"/><path d="M221.9,68 V86.3"/><path d="M328.9,68 V86.3"/><path d="M549.7,68 V86.3"/><path d="M829.4,68 V86.3"/><path d="M993.3,68 V86.3"/>
</g>
<!-- B -->
<path d="M106.6,71 H111.6 A3.1,3.1 0 0 1 111.6,77.2 H106.6 Z M106.6,77.2 H112.4 A3.15,3.15 0 0 1 112.4,83.5 H106.6 Z"/>
<!-- I -->
<path d="M137.5,71 H145.3 M134.3,83.4 H142.5 M141.5,71 L138.3,83.4"/>
<!-- U -->
<path d="M165,71 V77 A3.75,3.75 0 0 0 172.5,77 V71 M164.2,83.6 H173.2"/>
<!-- S strike -->
<path d="M190.6,77.2 H204.2 M193.5,74.6 A4.1,4.1 0 0 1 201.6,73.6 M200.4,77.4 A4.1,4.1 0 1 1 193.4,80.6"/>
<!-- T -->
<path d="M240.7,72.2 Q241,70.8 242.5,70.8 H250.8 Q252.3,70.8 252.6,72.2 M246.6,70.8 V83.6 M243.2,83.6 H249.8"/>
<!-- paint bucket -->
<rect x="269.65" y="71.2" width="9.6" height="11.8" rx="1.4" transform="rotate(45 274.45 77.1)"/>
<path d="M267.8,77.3 C271,76.3 274,78.6 276.5,79 L280.9,78.5" stroke-width="1.3"/>
<path d="M281.6,80.4 C283.3,82.2 283.5,83.3 283.3,84.1 A1.75,1.75 0 0 1 279.9,84.1 C279.7,83.3 279.9,82.2 281.6,80.4 Z" stroke-width="1.25"/>
<!-- borders -->
<rect x="297" y="70.3" width="14.1" height="13.9" rx="2.6"/>
<path d="M297,74.5 H311.1 M297,79.5 H311.1 M305.5,70.3 V74.5 M303.3,74.5 V79.5" stroke-width="1.3"/>
<path d="M300,70.3 V84.2 M308,79.5 V84.2" stroke-width="0.9"/>
<!-- align left/center/right -->
<path d="M346.6,71 H359.1 M346.6,75 H356 M346.6,79 H357.5 M346.6,83.1 H352.9"/>
<path d="M375.6,71 H388 M377.2,75 H386.4 M375.6,79 H388 M378.9,83.1 H384.7"/>
<path d="M404.4,71 H416.4 M407.5,75 H416.4 M406.2,79 H416.4 M410.6,83.1 H416.4"/>
<!-- wrap -->
<path d="M433.1,71 H445.4 M433.1,76.2 H442.8 A3.15,3.15 0 0 1 442.8,82.5 H439.6 M441.6,80.5 L439.6,82.5 L441.6,84.5 M433.1,82.5 H436"/>
<!-- vertical center -->
<path d="M461.7,77.2 H474.1 M467.9,69.3 V74.4 M465.9,72.4 L467.9,74.4 L469.9,72.4 M467.9,85.2 V80.2 M465.9,82.2 L467.9,80.2 L469.9,82.2"/>
<!-- align bottom -->
<path d="M496.8,70.2 V80.5 M493.6,77.3 L496.8,80.5 L500,77.3 M490.8,84.3 H502.8"/>
<!-- align top -->
<path d="M519.4,70.2 H531.4 M525.4,84.3 V74 M522.2,77.2 L525.4,74 L528.6,77.2"/>
<!-- dollar -->
<path d="M578.2,73.6 C577.7,71.9 576.3,71 574.5,71 C572.2,71 570.6,72.3 570.6,74.2 C570.6,76.2 572.4,76.9 574.5,77.4 C576.9,78 578.6,78.9 578.6,81 C578.6,83 576.8,84 574.5,84 C572.3,84 570.9,83 570.5,81.3 M574.5,69.6 V85"/>
<!-- percent -->
<circle cx="598.4" cy="73.7" r="2.3"/><circle cx="608.1" cy="81.2" r="2.3"/><path d="M607.5,70.9 L599.4,83.6"/>
<!-- decimals -->
<circle cx="627.3" cy="75.2" r="0.8" fill="#2a2a2a" stroke="none"/>
<ellipse cx="631.7" cy="74.3" rx="1.6" ry="2.3" stroke-width="1.3"/>
<path d="M638,82 H629.6 M631.8,79.8 L629.6,82 L631.8,84.2" stroke-width="1.4"/>
<circle cx="655.8" cy="75.2" r="0.8" fill="#2a2a2a" stroke="none"/>
<ellipse cx="659.6" cy="74.3" rx="1.6" ry="2.3" stroke-width="1.3"/>
<ellipse cx="665.2" cy="74.3" rx="1.6" ry="2.3" stroke-width="1.3"/>
<path d="M658.2,82 H666.7 M664.5,79.8 L666.7,82 L664.5,84.2" stroke-width="1.4"/>
<!-- chevron -->
<path d="M802.4,77 L804.7,79.3 L807,77" stroke-width="1.3"/>
<!-- plus square -->
<rect x="846.6" y="70.5" width="14.1" height="13.8" rx="3"/>
<path d="M853.65,74 V80.8 M850.25,77.4 H857.05"/>
<!-- x square -->
<rect x="875.6" y="70.5" width="14.1" height="13.8" rx="3"/>
<path d="M880.4,75.1 L884.9,79.7 M884.9,75.1 L880.4,79.7"/>
<!-- archive -->
<rect x="904.3" y="70.5" width="13.8" height="13.8" rx="2.5"/>
<path d="M904.3,74.6 H918.1 M911.2,77.2 V81.4 M909.3,79.6 L911.2,81.5 L913.1,79.6"/>
<!-- eraser -->
<g transform="rotate(-45 940.2 77.7)"><rect x="932.6" y="73.9" width="15.2" height="7.6" rx="1.6"/><path d="M937.4,73.9 V81.5"/></g>
<!-- search -->
<circle cx="967.5" cy="76.6" r="5.7"/><path d="M971.6,80.8 L975.3,84.5"/>
<!-- more -->
<circle cx="1011.8" cy="77.3" r="1.1" fill="#2a2a2a" stroke="none"/><circle cx="1017.8" cy="77.3" r="1.1" fill="#2a2a2a" stroke="none"/><circle cx="1023.8" cy="77.3" r="1.1" fill="#2a2a2a" stroke="none"/>
<!-- chart icon -->
<rect x="1170.6" y="69.6" width="15.5" height="15.5" rx="3.4" fill="#fff" stroke="#3b6df2" stroke-width="1.4"/>
<rect x="1173" y="72" width="10.7" height="10.6" fill="#e3eafc" stroke="none"/>
<path d="M1174.8,75.3 V80.5 M1178.25,74.2 V80.5 M1181.4,77.3 V80.5" stroke="#3b6df2" stroke-width="1.5"/>
<!-- pivot icon -->
<rect x="1255.5" y="69.6" width="15.6" height="15.5" rx="3.4" fill="#fff" stroke="#23a08d" stroke-width="1.4"/>
<rect x="1257.8" y="72" width="11" height="10.7" fill="#dff1ee" stroke="none"/>
<path d="M1259.2,79.5 H1262.3 A3.4,3.4 0 0 0 1265.7,76.1 V72.8 M1263.4,75 L1265.7,72.6 L1268,75 M1261.3,77.3 L1259,79.5 L1261.3,81.8" stroke="#23a08d" stroke-width="1.5"/>
<!-- avatars -->
<circle cx="1198.5" cy="25.4" r="13.7" fill="#fff" stroke="#8c47f0" stroke-width="1.6"/>
<circle cx="1198.5" cy="25.4" r="11.7" fill="#dcc6f6" stroke="none"/>
<circle cx="1232.3" cy="25.4" r="13.6" fill="#fff" stroke="#2ec38a" stroke-width="1.9"/>
<clipPath id="av2"><circle cx="1232.3" cy="25.4" r="12"/></clipPath>
<g clip-path="url(#av2)" stroke="none">
<rect x="1218" y="10" width="30" height="32" fill="#ece9ef"/>
<ellipse cx="1233.4" cy="26.4" rx="5.9" ry="7.3" fill="#d8a791"/>
<ellipse cx="1233.8" cy="28" rx="3" ry="3.5" fill="#e9c3b0"/>
<path d="M1226.8,26 C1226,18 1229.5,15.6 1233.6,15.8 C1238,16 1240.5,18.5 1239.6,25 C1238.8,21.5 1236.5,20 1233.5,20.3 C1230.5,20.6 1228.5,21.8 1226.8,26 Z" fill="#262220"/>
<path d="M1220,42 C1222,34.5 1226,33.2 1233,34 C1240,33.2 1243.5,34.5 1245,42 Z" fill="#1b1b1d"/>
</g>
<circle cx="1265.5" cy="25.4" r="13.6" fill="#fff" stroke="#f57a2b" stroke-width="1.9"/>
<clipPath id="av3"><circle cx="1265.5" cy="25.4" r="11.8"/></clipPath>
<g clip-path="url(#av3)" stroke="none">
<rect x="1251" y="10" width="30" height="32" fill="#444"/>
<rect x="1268" y="10" width="14" height="32" fill="#2a2a2a"/>
<path d="M1260.5,24 C1260,17 1270,16 1270.5,23 L1270,29 L1261,29 Z" fill="#333"/>
<ellipse cx="1265.3" cy="24.2" rx="3.6" ry="5" fill="#b3b3b3"/>
<path d="M1255,42 C1256,33 1259.5,30.5 1265.5,30.5 C1271.5,30.5 1275,33 1276,42 Z" fill="#ababab"/>
</g>
<!-- comment -->
<path d="M1308.9,32.6 A7,7 0 1 0 1302.1,27.4 L1301.7,32.7 Z" stroke-width="1.5"/>
<path d="M1305.6,24.2 H1311.8 M1305.6,27.4 H1308.9" stroke-width="1.5"/>
<!-- floating button -->
<rect x="35.3" y="192.8" width="30.2" height="30.5" rx="5.5" fill="#fff" stroke="#e4e4e4" stroke-width="1.5"/>
<rect x="42.6" y="200.6" width="15" height="14.8" rx="2.2" stroke-width="1.4"/>
<path d="M47.5,200.6 V215.4" stroke-width="1.4"/>
<path d="M50.5,208 H54.5" stroke-width="1.3"/><path d="M53.3,205.9 L55.6,208 L53.3,210.1 Z" fill="#2a2a2a" stroke-width="0.8"/>
</svg>
<div class="t" style="left:1099.20px;width:200px;text-align:center;top:19.63px;font-size:12.6px;font-weight:400;color:#1a1a1a;-webkit-text-stroke:0.45px #1a1a1a;">W</div>
</div></body></html>
